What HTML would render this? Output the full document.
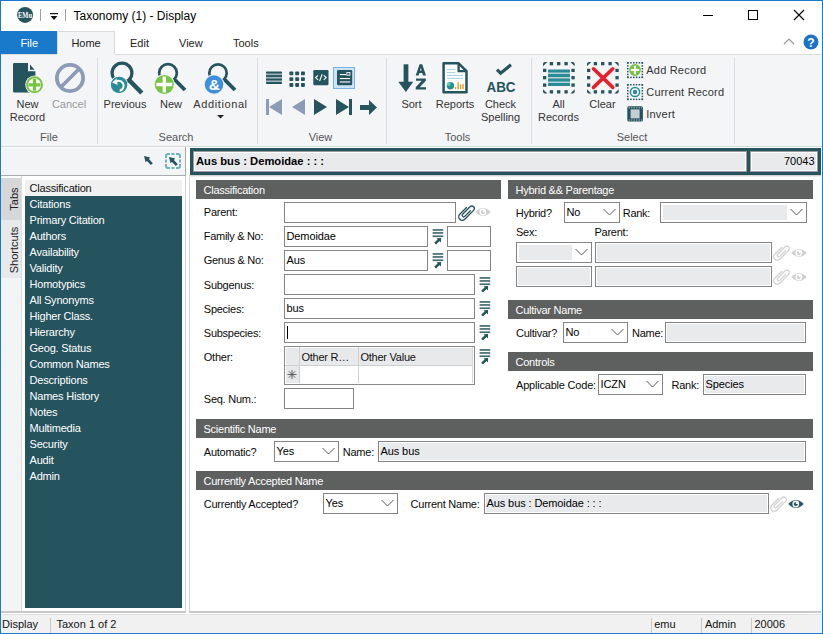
<!DOCTYPE html>
<html><head><meta charset="utf-8"><style>
html,body{margin:0;padding:0;}
body{width:823px;height:634px;overflow:hidden;position:relative;background:#fff;font-family:"Liberation Sans", sans-serif;}
.t{position:absolute;white-space:nowrap;line-height:1;font-family:"Liberation Sans", sans-serif;}
svg{overflow:visible}
</style></head><body>
<svg style="position:absolute;left:17px;top:7px" width="17" height="17" viewBox="0 0 17 17"><circle cx="8.1" cy="7.9" r="8" fill="#25535e"/><text x="1" y="11" font-family="Liberation Serif" font-size="7.6" font-weight="bold" fill="#fff" textLength="14" lengthAdjust="spacingAndGlyphs">EMu</text></svg>
<div style="position:absolute;left:40px;top:9px;width:1px;height:12px;background:#a0a0a0"></div>
<svg style="position:absolute;left:50px;top:12px" width="8" height="9" viewBox="0 0 8 9"><rect x="0" y="1" width="8" height="1.2" fill="#111"/><path d="M0.5 4 L7.5 4 L4 8 Z" fill="#111"/></svg>
<div style="position:absolute;left:65px;top:9px;width:1px;height:12px;background:#a0a0a0"></div>
<div class="t" style="left:73.5px;top:9.84px;font-size:12px;color:#000;font-weight:normal;">Taxonomy (1) - Display</div>
<div style="position:absolute;left:703px;top:15px;width:10px;height:1px;background:#000"></div>
<div style="position:absolute;left:748px;top:10px;width:10px;height:10px;border:1px solid #000;box-sizing:border-box"></div>
<svg style="position:absolute;left:793px;top:9px" width="12" height="12" viewBox="0 0 12 12"><path d="M1 1 L11 11 M11 1 L1 11" stroke="#000" stroke-width="1.1"/></svg>
<div style="position:absolute;left:1px;top:31px;width:56px;height:23px;background:#1979ca"></div>
<div class="t" style="left:20.4px;top:37.99px;font-size:11px;color:#fff;font-weight:normal;">File</div>
<div style="position:absolute;left:57px;top:31px;width:58px;height:24px;background:#f4f5f7;border:1px solid #dadbdc;border-bottom:none;box-sizing:border-box"></div>
<div class="t" style="left:71.4px;top:37.99px;font-size:11px;color:#222;font-weight:normal;">Home</div>
<div class="t" style="left:130px;top:37.99px;font-size:11px;color:#222;font-weight:normal;">Edit</div>
<div class="t" style="left:179px;top:37.99px;font-size:11px;color:#222;font-weight:normal;">View</div>
<div class="t" style="left:233px;top:37.99px;font-size:11px;color:#222;font-weight:normal;">Tools</div>
<svg style="position:absolute;left:783px;top:37px" width="12" height="9" viewBox="0 0 12 9"><path d="M1 7 L6 2 L11 7" stroke="#999" stroke-width="1.2" fill="none"/></svg>
<svg style="position:absolute;left:803px;top:34px" width="16" height="16" viewBox="0 0 16 16"><circle cx="8" cy="8" r="7.5" fill="#1a73c9"/><text x="8" y="12.5" font-family="Liberation Sans" font-size="12" font-weight="bold" fill="#fff" text-anchor="middle">?</text></svg>
<div style="position:absolute;left:1px;top:54px;width:821px;height:92px;background:#f4f5f7"></div>
<div style="position:absolute;left:1px;top:54px;width:56px;height:1px;background:#dadbdc"></div>
<div style="position:absolute;left:115px;top:54px;width:707px;height:1px;background:#dadbdc"></div>
<div style="position:absolute;left:1px;top:146px;width:821px;height:1px;background:#d5d6d8"></div>
<div style="position:absolute;left:97px;top:58px;width:1px;height:86px;background:#dcdde0"></div>
<div style="position:absolute;left:257px;top:58px;width:1px;height:86px;background:#dcdde0"></div>
<div style="position:absolute;left:386px;top:58px;width:1px;height:86px;background:#dcdde0"></div>
<div style="position:absolute;left:531px;top:58px;width:1px;height:86px;background:#dcdde0"></div>
<div style="position:absolute;left:734px;top:58px;width:1px;height:86px;background:#dcdde0"></div>
<div class="t" style="left:-151.1px;width:400px;text-align:center;top:132.19px;font-size:11px;color:#555;font-weight:normal;">File</div>
<div class="t" style="left:-24px;width:400px;text-align:center;top:132.19px;font-size:11px;color:#555;font-weight:normal;">Search</div>
<div class="t" style="left:120.5px;width:400px;text-align:center;top:132.19px;font-size:11px;color:#555;font-weight:normal;">View</div>
<div class="t" style="left:257.5px;width:400px;text-align:center;top:132.19px;font-size:11px;color:#555;font-weight:normal;">Tools</div>
<div class="t" style="left:432px;width:400px;text-align:center;top:132.19px;font-size:11px;color:#555;font-weight:normal;">Select</div>
<svg style="position:absolute;left:12px;top:62px" width="36" height="34" viewBox="0 0 36 34"><path d="M1 2.2 Q1 1 2.2 1 H16 V9.2 H23.4 V29.2 Q23.4 30.4 22.2 30.4 H2.2 Q1 30.4 1 29.2 Z" fill="#25535e"/>
<path d="M18 2.4 V7.7 H22.6 Z" fill="#25535e"/>
<circle cx="22.5" cy="22.8" r="9.3" fill="#f4f5f7"/>
<circle cx="22.5" cy="22.8" r="7.5" fill="#fff" stroke="#77c442" stroke-width="1.9"/>
<path d="M22.5 16.8 V28.8 M16.5 22.8 H28.5" stroke="#77c442" stroke-width="3.2"/></svg>
<div class="t" style="left:-172.5px;width:400px;text-align:center;top:99.39px;font-size:11px;color:#333;font-weight:normal;">New</div>
<div class="t" style="left:-172.5px;width:400px;text-align:center;top:111.89px;font-size:11px;color:#333;font-weight:normal;">Record</div>
<svg style="position:absolute;left:55px;top:63px" width="30" height="30" viewBox="0 0 30 30"><circle cx="15" cy="15" r="13.1" fill="none" stroke="#8c9bb6" stroke-width="3.8"/><path d="M6 24 L24 6" stroke="#8c9bb6" stroke-width="3.8"/></svg>
<div class="t" style="left:-131px;width:400px;text-align:center;top:99.39px;font-size:11px;color:#999;font-weight:normal;">Cancel</div>
<svg style="position:absolute;left:101.5px;top:53.3px" width="44" height="44" viewBox="0 0 44 44"><circle cx="20" cy="20" r="9.9" fill="none" stroke="#25535e" stroke-width="3.2"/><path d="M27.00 27.00 L39.80 40.00" stroke="#25535e" stroke-width="4.6"/><circle cx="17.099999999999994" cy="31.900000000000006" r="9.2" fill="#f4f5f7"/><circle cx="17.099999999999994" cy="31.900000000000006" r="8.2" fill="#2a8b96"/><path d="M12.599999999999994 29.900000000000006 A5 5 0 1 1 17.599999999999994 37.7" stroke="#fff" stroke-width="2" fill="none"/><path d="M10.099999999999994 29.400000000000006 L14.599999999999994 25.400000000000006 L15.599999999999994 31.900000000000006 Z" fill="#fff"/></svg>
<svg style="position:absolute;left:148px;top:53px" width="44" height="44" viewBox="0 0 44 44"><circle cx="20" cy="20" r="8.85" fill="none" stroke="#25535e" stroke-width="2.7"/><path d="M26.26 26.26 L37.00 37.00" stroke="#25535e" stroke-width="3.8"/><circle cx="16.30000000000001" cy="31.5" r="10.5" fill="#f4f5f7"/><circle cx="16.30000000000001" cy="31.5" r="9.5" fill="#76c442"/><path d="M16.30000000000001 23.5 V39.5 M8.300000000000011 31.5 H24.30000000000001" stroke="#fff" stroke-width="3.4"/></svg>
<svg style="position:absolute;left:198px;top:53px" width="44" height="44" viewBox="0 0 44 44"><circle cx="20" cy="20" r="8.7" fill="none" stroke="#25535e" stroke-width="2.7"/><path d="M26.15 26.15 L37.00 37.00" stroke="#25535e" stroke-width="3.8"/><circle cx="16" cy="31.5" r="10.3" fill="#f4f5f7"/><circle cx="16" cy="31.5" r="9.3" fill="#3f8fe0"/><text x="16.3" y="37.1" font-family="Liberation Sans" font-size="15.5" font-weight="bold" fill="#fff" text-anchor="middle">&amp;</text></svg>
<div class="t" style="left:-75px;width:400px;text-align:center;top:99.39px;font-size:11px;color:#333;font-weight:normal;">Previous</div>
<div class="t" style="left:-29px;width:400px;text-align:center;top:99.39px;font-size:11px;color:#333;font-weight:normal;">New</div>
<div class="t" style="left:20.5px;width:400px;text-align:center;top:99.39px;font-size:11px;color:#333;font-weight:normal;letter-spacing:0.6px">Additional</div>
<svg style="position:absolute;left:217px;top:115px" width="7" height="4" viewBox="0 0 7 4"><path d="M0 0 L7 0 L3.5 3.5 Z" fill="#222"/></svg>
<svg style="position:absolute;left:266px;top:71px" width="16" height="14" viewBox="0 0 16 14"><rect x="0" y="1" width="16" height="12" fill="#9fb6ba"/><rect x="0" y="0.6" width="16" height="2" rx="0.8" fill="#25535e"/><rect x="0" y="4.1" width="16" height="1.8" fill="#25535e"/><rect x="0" y="7.6" width="16" height="1.8" fill="#25535e"/><rect x="0" y="11.1" width="16" height="2" rx="0.8" fill="#25535e"/></svg>
<svg style="position:absolute;left:289px;top:70.5px" width="17" height="17" viewBox="0 0 17 17"><rect x="0.4" y="0.4" width="3.9" height="3.9" rx="0.8" fill="#25535e"/><rect x="6.2" y="0.4" width="3.9" height="3.9" rx="0.8" fill="#25535e"/><rect x="12.0" y="0.4" width="3.9" height="3.9" rx="0.8" fill="#25535e"/><rect x="0.4" y="6.2" width="3.9" height="3.9" rx="0.8" fill="#25535e"/><rect x="6.2" y="6.2" width="3.9" height="3.9" rx="0.8" fill="#25535e"/><rect x="12.0" y="6.2" width="3.9" height="3.9" rx="0.8" fill="#25535e"/><rect x="0.4" y="12.0" width="3.9" height="3.9" rx="0.8" fill="#25535e"/><rect x="6.2" y="12.0" width="3.9" height="3.9" rx="0.8" fill="#25535e"/><rect x="12.0" y="12.0" width="3.9" height="3.9" rx="0.8" fill="#25535e"/></svg>
<svg style="position:absolute;left:313px;top:70.4px" width="16" height="16" viewBox="0 0 16 16"><rect x="0.3" y="0" width="15.2" height="15.2" rx="1.2" fill="#25535e"/><path d="M5 5.3 L2.6 7.6 L5 9.9 M10.8 5.3 L13.2 7.6 L10.8 9.9 M9.2 4.3 L6.6 11" stroke="#fff" stroke-width="1.1" fill="none"/></svg>
<div style="position:absolute;left:333px;top:67px;width:22px;height:22px;background:#cde4f7;border:1px solid #7ab2e8;box-sizing:border-box"></div>
<svg style="position:absolute;left:336.5px;top:70.4px" width="16" height="16" viewBox="0 0 16 16"><rect x="0" y="0" width="15.2" height="15.2" rx="1.2" fill="#25535e"/><rect x="2.8" y="4" width="6.2" height="1.1" fill="#fff"/><rect x="9.8" y="2.6" width="3.2" height="2.6" fill="none" stroke="#fff" stroke-width="0.9"/><rect x="2.8" y="8" width="10.4" height="1.1" fill="#fff"/><rect x="2.8" y="11.4" width="10.4" height="1.1" fill="#fff"/></svg>
<svg style="position:absolute;left:265px;top:98px" width="18" height="18" viewBox="0 0 18 18"><rect x="1" y="1" width="3" height="16" fill="#8c9bb6"/><path d="M4 9 L17 1 L17 17 Z" fill="#8c9bb6"/></svg>
<svg style="position:absolute;left:291px;top:98px" width="16" height="18" viewBox="0 0 16 18"><path d="M1 9 L14 1 L14 17 Z" fill="#8c9bb6"/></svg>
<svg style="position:absolute;left:312px;top:98px" width="16" height="18" viewBox="0 0 16 18"><path d="M2 1 L15 9 L2 17 Z" fill="#25535e"/></svg>
<svg style="position:absolute;left:335px;top:98px" width="18" height="18" viewBox="0 0 18 18"><path d="M1 1 L14 9 L1 17 Z" fill="#25535e"/><rect x="14" y="1" width="3" height="16" fill="#25535e"/></svg>
<svg style="position:absolute;left:359px;top:99px" width="19" height="17" viewBox="0 0 19 17"><path d="M1 6 L10 6 L10 1 L18 8.5 L10 16 L10 11 L1 11 Z" fill="#25535e"/></svg>
<svg style="position:absolute;left:397px;top:62px" width="30" height="32" viewBox="0 0 30 32"><rect x="6.6" y="2.3" width="4.8" height="20" fill="#25535e"/><path d="M1.3 19.7 L16.3 19.7 L8.9 30 Z" fill="#25535e"/><path d="M18.7 13.4 L22.6 2.3 L25.2 2.3 L29 13.4 L26 13.4 L25.2 10.9 L22.4 10.9 L21.6 13.4 Z M23 8.6 L24.6 8.6 L23.8 5.8 Z" fill="#25535e" fill-rule="evenodd"/><path d="M19 16.5 L28.8 16.5 L28.8 18.8 L22.8 25.3 L29 25.3 L29 27.6 L18.7 27.6 L18.7 25.3 L24.7 18.8 L19 18.8 Z" fill="#25535e"/></svg>
<div class="t" style="left:211.5px;width:400px;text-align:center;top:99.39px;font-size:11px;color:#333;font-weight:normal;">Sort</div>
<svg style="position:absolute;left:441px;top:61px" width="28" height="34" viewBox="0 0 28 34"><path d="M2.6 2.3 H17.6 L25.5 10.2 V31.3 H2.6 Z" fill="#fff" stroke="#25535e" stroke-width="2.5" stroke-linejoin="round"/>
<path d="M17.6 2.3 V10.2 H25.5" fill="none" stroke="#25535e" stroke-width="2.3"/>
<g fill="#a9d3ec"><rect x="6" y="7.9" width="8.3" height="1.1"/><rect x="6" y="10.9" width="8.3" height="1.1"/><rect x="6" y="13.9" width="16" height="1.1"/><rect x="6" y="16.8" width="16" height="1.1"/></g>
<circle cx="9.4" cy="24.8" r="3.7" fill="#2a8f93"/><path d="M9.4 24.8 L9.4 21.1 A3.7 3.7 0 0 0 5.7 24.8 Z" fill="#56d0b2"/>
<g fill="#ec9a2a"><rect x="13.8" y="26" width="1.4" height="2.1"/><rect x="16.5" y="21.2" width="1.4" height="6.9"/><rect x="18.9" y="23.5" width="1.4" height="4.6"/><rect x="21.3" y="22.9" width="1.4" height="5.2"/></g></svg>
<div class="t" style="left:255px;width:400px;text-align:center;top:99.39px;font-size:11px;color:#333;font-weight:normal;">Reports</div>
<svg style="position:absolute;left:485px;top:62px" width="33" height="31" viewBox="0 0 33 31"><path d="M12 7.6 L15.6 11.2 L26 2.8" stroke="#25535e" stroke-width="3.2" fill="none"/><text x="1.5" y="29.6" font-family="Liberation Sans" font-size="14" font-weight="bold" fill="#25535e" textLength="29" lengthAdjust="spacingAndGlyphs">ABC</text></svg>
<div class="t" style="left:300.5px;width:400px;text-align:center;top:99.39px;font-size:11px;color:#333;font-weight:normal;">Check</div>
<div class="t" style="left:300.5px;width:400px;text-align:center;top:111.89px;font-size:11px;color:#333;font-weight:normal;">Spelling</div>
<svg style="position:absolute;left:543px;top:62px" width="32" height="32" viewBox="0 0 32 32"><g fill="#25535e"><rect x="6.75" y="0" width="3.3" height="3.3"/><rect x="6.75" y="28.2" width="3.3" height="3.3"/><rect x="0" y="6.75" width="3.3" height="3.3"/><rect x="28.4" y="6.75" width="3.3" height="3.3"/><rect x="14.05" y="0" width="3.3" height="3.3"/><rect x="14.05" y="28.2" width="3.3" height="3.3"/><rect x="0" y="14.05" width="3.3" height="3.3"/><rect x="28.4" y="14.05" width="3.3" height="3.3"/><rect x="21.45" y="0" width="3.3" height="3.3"/><rect x="21.45" y="28.2" width="3.3" height="3.3"/><rect x="0" y="21.45" width="3.3" height="3.3"/><rect x="28.4" y="21.45" width="3.3" height="3.3"/><path d="M0 4.3 V2 A2 2 0 0 1 2 0 H4.3 Z"/><path d="M27.4 0 H29.7 A2 2 0 0 1 31.7 2 V4.3 Z"/><path d="M31.7 27.2 V29.5 A2 2 0 0 1 29.7 31.5 H27.4 Z"/><path d="M4.3 31.5 H2 A2 2 0 0 1 0 29.5 V27.2 Z"/></g><rect x="5" y="8" width="22" height="16" fill="#b5d3d6"/><g fill="#2a8b96"><rect x="5" y="7.5" width="22" height="3" rx="0.6"/><rect x="5" y="12" width="22" height="3" rx="0.6"/><rect x="5" y="16.5" width="22" height="3" rx="0.6"/><rect x="5" y="21" width="22" height="3" rx="0.6"/></g></svg>
<div class="t" style="left:358.5px;width:400px;text-align:center;top:99.39px;font-size:11px;color:#333;font-weight:normal;">All</div>
<div class="t" style="left:358.5px;width:400px;text-align:center;top:111.89px;font-size:11px;color:#333;font-weight:normal;">Records</div>
<svg style="position:absolute;left:587px;top:62px" width="32" height="32" viewBox="0 0 32 32"><g fill="#25535e"><rect x="6.75" y="0" width="3.3" height="3.3"/><rect x="6.75" y="28.2" width="3.3" height="3.3"/><rect x="0" y="6.75" width="3.3" height="3.3"/><rect x="28.4" y="6.75" width="3.3" height="3.3"/><rect x="14.05" y="0" width="3.3" height="3.3"/><rect x="14.05" y="28.2" width="3.3" height="3.3"/><rect x="0" y="14.05" width="3.3" height="3.3"/><rect x="28.4" y="14.05" width="3.3" height="3.3"/><rect x="21.45" y="0" width="3.3" height="3.3"/><rect x="21.45" y="28.2" width="3.3" height="3.3"/><rect x="0" y="21.45" width="3.3" height="3.3"/><rect x="28.4" y="21.45" width="3.3" height="3.3"/><path d="M0 4.3 V2 A2 2 0 0 1 2 0 H4.3 Z"/><path d="M27.4 0 H29.7 A2 2 0 0 1 31.7 2 V4.3 Z"/><path d="M31.7 27.2 V29.5 A2 2 0 0 1 29.7 31.5 H27.4 Z"/><path d="M4.3 31.5 H2 A2 2 0 0 1 0 29.5 V27.2 Z"/></g><path d="M6.5 6.8 L25.8 25.4 M25.8 6.8 L6.5 25.4" stroke="#e8202a" stroke-width="3.6" stroke-linecap="round"/></svg>
<div class="t" style="left:402.5px;width:400px;text-align:center;top:99.39px;font-size:11px;color:#333;font-weight:normal;">Clear</div>
<svg style="position:absolute;left:627px;top:62px" width="17" height="17" viewBox="0 0 17 17"><g fill="#25535e"><rect x="0.3" y="0" width="1.5" height="1.5"/><rect x="0.3" y="14.6" width="1.5" height="1.5"/><rect x="0" y="0.3" width="1.5" height="1.5"/><rect x="14.6" y="0.3" width="1.5" height="1.5"/><rect x="3.15" y="0" width="1.5" height="1.5"/><rect x="3.15" y="14.6" width="1.5" height="1.5"/><rect x="0" y="3.15" width="1.5" height="1.5"/><rect x="14.6" y="3.15" width="1.5" height="1.5"/><rect x="6.0" y="0" width="1.5" height="1.5"/><rect x="6.0" y="14.6" width="1.5" height="1.5"/><rect x="0" y="6.0" width="1.5" height="1.5"/><rect x="14.6" y="6.0" width="1.5" height="1.5"/><rect x="8.850000000000001" y="0" width="1.5" height="1.5"/><rect x="8.850000000000001" y="14.6" width="1.5" height="1.5"/><rect x="0" y="8.850000000000001" width="1.5" height="1.5"/><rect x="14.6" y="8.850000000000001" width="1.5" height="1.5"/><rect x="11.700000000000001" y="0" width="1.5" height="1.5"/><rect x="11.700000000000001" y="14.6" width="1.5" height="1.5"/><rect x="0" y="11.700000000000001" width="1.5" height="1.5"/><rect x="14.6" y="11.700000000000001" width="1.5" height="1.5"/><rect x="14.55" y="0" width="1.5" height="1.5"/><rect x="14.55" y="14.6" width="1.5" height="1.5"/><rect x="0" y="14.55" width="1.5" height="1.5"/><rect x="14.6" y="14.55" width="1.5" height="1.5"/></g><circle cx="8" cy="8" r="5.9" fill="#77c442"/><path d="M8 3.8 V12.2 M3.8 8 H12.2" stroke="#fff" stroke-width="2.2"/></svg>
<svg style="position:absolute;left:627px;top:84px" width="17" height="17" viewBox="0 0 17 17"><g fill="#25535e"><rect x="0.3" y="0" width="1.5" height="1.5"/><rect x="0.3" y="14.6" width="1.5" height="1.5"/><rect x="0" y="0.3" width="1.5" height="1.5"/><rect x="14.6" y="0.3" width="1.5" height="1.5"/><rect x="3.15" y="0" width="1.5" height="1.5"/><rect x="3.15" y="14.6" width="1.5" height="1.5"/><rect x="0" y="3.15" width="1.5" height="1.5"/><rect x="14.6" y="3.15" width="1.5" height="1.5"/><rect x="6.0" y="0" width="1.5" height="1.5"/><rect x="6.0" y="14.6" width="1.5" height="1.5"/><rect x="0" y="6.0" width="1.5" height="1.5"/><rect x="14.6" y="6.0" width="1.5" height="1.5"/><rect x="8.850000000000001" y="0" width="1.5" height="1.5"/><rect x="8.850000000000001" y="14.6" width="1.5" height="1.5"/><rect x="0" y="8.850000000000001" width="1.5" height="1.5"/><rect x="14.6" y="8.850000000000001" width="1.5" height="1.5"/><rect x="11.700000000000001" y="0" width="1.5" height="1.5"/><rect x="11.700000000000001" y="14.6" width="1.5" height="1.5"/><rect x="0" y="11.700000000000001" width="1.5" height="1.5"/><rect x="14.6" y="11.700000000000001" width="1.5" height="1.5"/><rect x="14.55" y="0" width="1.5" height="1.5"/><rect x="14.55" y="14.6" width="1.5" height="1.5"/><rect x="0" y="14.55" width="1.5" height="1.5"/><rect x="14.6" y="14.55" width="1.5" height="1.5"/></g><circle cx="8" cy="8" r="4.6" fill="none" stroke="#2a8b96" stroke-width="1.5"/><circle cx="8" cy="8" r="2.2" fill="#2a8b96"/></svg>
<svg style="position:absolute;left:627px;top:106px" width="17" height="17" viewBox="0 0 17 17"><rect x="0.3" y="0.2" width="15.6" height="15.4" rx="1.6" fill="#25535e"/><rect x="3.6" y="3.4" width="9" height="9" fill="#c3ced2"/><path d="M1.6 1.8 H15 M1.6 14 H15" stroke="#b9c7cb" stroke-width="1" stroke-dasharray="1.3 1.2"/></svg>
<div class="t" style="left:646.3px;top:65.09px;font-size:11px;color:#333;font-weight:normal;letter-spacing:0.2px">Add Record</div>
<div class="t" style="left:646.3px;top:87.09px;font-size:11px;color:#333;font-weight:normal;letter-spacing:0.2px">Current Record</div>
<div class="t" style="left:646.3px;top:109.09px;font-size:11px;color:#333;font-weight:normal;letter-spacing:0.2px">Invert</div>
<div style="position:absolute;left:1px;top:147px;width:184px;height:28px;background:#f3f4f6"></div>
<div style="position:absolute;left:1px;top:147px;width:184px;height:1px;background:#fff"></div>
<div style="position:absolute;left:1px;top:147px;width:1px;height:28px;background:#fff"></div>
<div style="position:absolute;left:1px;top:175px;width:185px;height:1px;background:#ababab"></div>
<div style="position:absolute;left:185px;top:147px;width:1px;height:29px;background:#ababab"></div>
<div style="position:absolute;left:185px;top:176px;width:1px;height:435px;background:#d0d0d0"></div>
<div style="position:absolute;left:189px;top:175px;width:1px;height:436px;background:#d6d6d6"></div>
<div style="position:absolute;left:189px;top:175px;width:632px;height:1px;background:#d4d4d4"></div>
<div style="position:absolute;left:189px;top:176px;width:632px;height:1px;background:#ececec"></div>
<svg style="position:absolute;left:142px;top:154px" width="14" height="14" viewBox="0 0 14 14"><path d="M2 2 L8.3 3.6 L3.6 8.3 Z" fill="#25535e"/><path d="M5 5 L9.8 10.2" stroke="#25535e" stroke-width="2.7"/></svg>
<svg style="position:absolute;left:164px;top:152px" width="18" height="18" viewBox="0 0 18 18"><path d="M2 6 V4 A2 2 0 0 1 4 2 H6 M12 2 H14 A2 2 0 0 1 16 4 V6 M16 12 V14 A2 2 0 0 1 14 16 H12 M6 16 H4 A2 2 0 0 1 2 14 V12 M7.5 2 H10.5 M16 7.5 V10.5 M10.5 16 H7.5 M2 10.5 V7.5" stroke="#6fb3ba" stroke-width="2" fill="none"/></svg>
<svg style="position:absolute;left:167px;top:154.5px" width="14" height="14" viewBox="0 0 14 14"><path d="M2 2 L8.3 3.6 L3.6 8.3 Z" fill="#25535e"/><path d="M5 5 L9.8 10.2" stroke="#25535e" stroke-width="2.7"/></svg>
<div style="position:absolute;left:1px;top:176px;width:20px;height:436px;background:#f3f4f6"></div>
<div style="position:absolute;left:21px;top:176px;width:1px;height:436px;background:#dcdcdc"></div>
<div style="position:absolute;left:22px;top:176px;width:163px;height:436px;background:#fff"></div>
<div style="position:absolute;left:1px;top:176px;width:20px;height:2px;background:#fff"></div>
<div style="position:absolute;left:1px;top:178px;width:20px;height:42px;background:#d6d7d9"></div>
<div style="position:absolute;left:1px;top:220px;width:20px;height:58px;background:#e8e9eb"></div>
<div class="t" style="left:8.5px;top:199px;font-size:11px;color:#222;transform-origin:0 0;transform:rotate(-90deg) translate(-50%,0);"><span style="position:relative;left:-0px">Tabs</span></div>
<div class="t" style="left:8.5px;top:250px;font-size:11px;color:#222;transform-origin:0 0;transform:rotate(-90deg) translate(-50%,0);">Shortcuts</div>
<div style="position:absolute;left:25px;top:180px;width:157px;height:428px;background:#25535e"></div>
<div style="position:absolute;left:25px;top:180px;width:157px;height:16px;background:#f0f0f0"></div>
<div class="t" style="left:29.5px;top:182.69px;font-size:11px;color:#111;font-weight:normal;letter-spacing:-0.2px">Classification</div>
<div class="t" style="left:29.5px;top:198.69px;font-size:11px;color:#fff;font-weight:normal;letter-spacing:-0.2px">Citations</div>
<div class="t" style="left:29.5px;top:214.69px;font-size:11px;color:#fff;font-weight:normal;letter-spacing:-0.2px">Primary Citation</div>
<div class="t" style="left:29.5px;top:230.69px;font-size:11px;color:#fff;font-weight:normal;letter-spacing:-0.2px">Authors</div>
<div class="t" style="left:29.5px;top:246.69px;font-size:11px;color:#fff;font-weight:normal;letter-spacing:-0.2px">Availability</div>
<div class="t" style="left:29.5px;top:262.69px;font-size:11px;color:#fff;font-weight:normal;letter-spacing:-0.2px">Validity</div>
<div class="t" style="left:29.5px;top:278.69px;font-size:11px;color:#fff;font-weight:normal;letter-spacing:-0.2px">Homotypics</div>
<div class="t" style="left:29.5px;top:294.69px;font-size:11px;color:#fff;font-weight:normal;letter-spacing:-0.2px">All Synonyms</div>
<div class="t" style="left:29.5px;top:310.69px;font-size:11px;color:#fff;font-weight:normal;letter-spacing:-0.2px">Higher Class.</div>
<div class="t" style="left:29.5px;top:326.69px;font-size:11px;color:#fff;font-weight:normal;letter-spacing:-0.2px">Hierarchy</div>
<div class="t" style="left:29.5px;top:342.69px;font-size:11px;color:#fff;font-weight:normal;letter-spacing:-0.2px">Geog. Status</div>
<div class="t" style="left:29.5px;top:358.69px;font-size:11px;color:#fff;font-weight:normal;letter-spacing:-0.2px">Common Names</div>
<div class="t" style="left:29.5px;top:374.69px;font-size:11px;color:#fff;font-weight:normal;letter-spacing:-0.2px">Descriptions</div>
<div class="t" style="left:29.5px;top:390.69px;font-size:11px;color:#fff;font-weight:normal;letter-spacing:-0.2px">Names History</div>
<div class="t" style="left:29.5px;top:406.69px;font-size:11px;color:#fff;font-weight:normal;letter-spacing:-0.2px">Notes</div>
<div class="t" style="left:29.5px;top:422.69px;font-size:11px;color:#fff;font-weight:normal;letter-spacing:-0.2px">Multimedia</div>
<div class="t" style="left:29.5px;top:438.69px;font-size:11px;color:#fff;font-weight:normal;letter-spacing:-0.2px">Security</div>
<div class="t" style="left:29.5px;top:454.69px;font-size:11px;color:#fff;font-weight:normal;letter-spacing:-0.2px">Audit</div>
<div class="t" style="left:29.5px;top:470.69px;font-size:11px;color:#fff;font-weight:normal;letter-spacing:-0.2px">Admin</div>
<div style="position:absolute;left:1px;top:611px;width:185px;height:2px;background:#c8c8c8"></div>
<div style="position:absolute;left:189px;top:611px;width:632px;height:2px;background:#c8c8c8"></div>
<div style="position:absolute;left:1px;top:614px;width:821px;height:1px;background:#e4e4e4"></div>
<div style="position:absolute;left:1px;top:615px;width:821px;height:18px;background:#f1f1f1"></div>
<div style="position:absolute;left:50px;top:618px;width:1px;height:15px;background:#c8c8c8"></div>
<div style="position:absolute;left:651px;top:618px;width:1px;height:15px;background:#c8c8c8"></div>
<div style="position:absolute;left:701px;top:618px;width:1px;height:15px;background:#c8c8c8"></div>
<div style="position:absolute;left:751px;top:618px;width:1px;height:15px;background:#c8c8c8"></div>
<div class="t" style="left:2px;top:618.69px;font-size:11px;color:#111;font-weight:normal;">Display</div>
<div class="t" style="left:56.5px;top:618.69px;font-size:11px;color:#111;font-weight:normal;">Taxon 1 of 2</div>
<div class="t" style="left:654.2px;top:618.69px;font-size:11px;color:#111;font-weight:normal;">emu</div>
<div class="t" style="left:704.9px;top:618.69px;font-size:11px;color:#111;font-weight:normal;">Admin</div>
<div class="t" style="left:754.5px;top:618.69px;font-size:11px;color:#111;font-weight:normal;">20006</div>
<div style="position:absolute;left:190px;top:148px;width:631px;height:27px;background:#25535e"></div>
<div style="position:absolute;left:193px;top:151px;width:554px;height:21px;background:#fff;border:1px solid #9a9a9a;box-sizing:border-box"></div>
<div style="position:absolute;left:195px;top:153px;width:550px;height:17px;background:#e9eaec"></div>
<div style="position:absolute;left:750px;top:151px;width:68px;height:21px;background:#fff;border:1px solid #9a9a9a;box-sizing:border-box"></div>
<div style="position:absolute;left:752px;top:153px;width:64px;height:17px;background:#e9eaec"></div>
<div class="t" style="left:196px;top:155.52px;font-size:11.2px;color:#000;font-weight:bold;">Aus bus : Demoidae : : :</div>
<div class="t" style="left:414.5px;width:400px;text-align:right;top:155.69px;font-size:11px;color:#000;font-weight:normal;">70043</div>
<div style="position:absolute;left:196px;top:180px;width:305px;height:19px;background:#5e5f5f"></div>
<div class="t" style="left:203.5px;top:184.69px;font-size:11px;color:#fff;font-weight:normal;letter-spacing:-0.25px">Classification</div>
<div style="position:absolute;left:508px;top:180px;width:305px;height:19px;background:#5e5f5f"></div>
<div class="t" style="left:515.5px;top:184.69px;font-size:11px;color:#fff;font-weight:normal;letter-spacing:-0.25px">Hybrid &amp;&amp; Parentage</div>
<div style="position:absolute;left:508px;top:300px;width:305px;height:19px;background:#5e5f5f"></div>
<div class="t" style="left:515.5px;top:304.69px;font-size:11px;color:#fff;font-weight:normal;letter-spacing:-0.25px">Cultivar Name</div>
<div style="position:absolute;left:508px;top:352px;width:305px;height:19px;background:#5e5f5f"></div>
<div class="t" style="left:515.5px;top:356.69px;font-size:11px;color:#fff;font-weight:normal;letter-spacing:-0.25px">Controls</div>
<div style="position:absolute;left:196px;top:419px;width:617px;height:19px;background:#5e5f5f"></div>
<div class="t" style="left:203.5px;top:423.69px;font-size:11px;color:#fff;font-weight:normal;letter-spacing:-0.25px">Scientific Name</div>
<div style="position:absolute;left:196px;top:471px;width:617px;height:19px;background:#5e5f5f"></div>
<div class="t" style="left:203.5px;top:475.69px;font-size:11px;color:#fff;font-weight:normal;letter-spacing:-0.25px">Currently Accepted Name</div>
<div class="t" style="left:203.8px;top:207.49px;font-size:11px;color:#0a0a0a;font-weight:normal;letter-spacing:-0.25px">Parent:</div>
<div style="position:absolute;left:284px;top:202px;width:172px;height:21px;background:#fff;border:1px solid #848484;box-sizing:border-box"></div>
<svg style="position:absolute;left:458px;top:204px" width="17" height="17" viewBox="0 0 17 17"><g transform="translate(8.5 8.5) rotate(45) translate(-3.5 -10)"><path d="M5 6 L5 14 A1.5 1.5 0 0 1 2 14 L2 3.5 A2.5 2.5 0 0 1 7 3.5 L7 16 A3.5 3.5 0 0 1 0 16 L0 6.5" stroke="#25535e" stroke-width="1.35" fill="none" stroke-linecap="round"/></g></svg>
<svg style="position:absolute;left:475px;top:207px" width="16" height="10" viewBox="0 0 16 10"><path d="M0.3 5 Q8 -3.2 15.7 5 Q8 13.2 0.3 5 Z" fill="#cfcfcf"/><circle cx="7.8" cy="5" r="3.4" fill="#fff"/><circle cx="7.8" cy="5" r="2.1" fill="#cfcfcf"/><path d="M7.8 5 L7.8 2.6 A2.4 2.4 0 0 1 10.2 5 Z" fill="#fff"/></svg>
<div class="t" style="left:203.8px;top:231.49px;font-size:11px;color:#0a0a0a;font-weight:normal;letter-spacing:-0.3px">Family &amp; No:</div>
<div style="position:absolute;left:284px;top:226px;width:144px;height:21px;background:#fff;border:1px solid #848484;box-sizing:border-box"></div>
<div class="t" style="left:286.5px;top:231.39px;font-size:11px;color:#000;font-weight:normal;letter-spacing:-0.1px">Demoidae</div>
<svg style="position:absolute;left:432px;top:229px" width="12" height="16" viewBox="0 0 12 16"><g fill="#25535e" opacity="0.85"><rect x="0.6" y="0.1" width="10.6" height="1.7"/><rect x="0.6" y="3.1" width="10.6" height="1.7"/><rect x="0.6" y="6.4" width="10.6" height="1.7"/></g><path d="M3.1 14.7 L7.2 10.6" stroke="#25535e" stroke-width="2.6"/><path d="M4.6 9.3 L9.1 9.1 L9 13.4 Z" fill="#25535e"/></svg>
<div style="position:absolute;left:447px;top:226px;width:44px;height:21px;background:#fff;border:1px solid #848484;box-sizing:border-box"></div>
<div class="t" style="left:203.8px;top:255.49px;font-size:11px;color:#0a0a0a;font-weight:normal;letter-spacing:-0.3px">Genus &amp; No:</div>
<div style="position:absolute;left:284px;top:250px;width:144px;height:21px;background:#fff;border:1px solid #848484;box-sizing:border-box"></div>
<div class="t" style="left:286.5px;top:255.39px;font-size:11px;color:#000;font-weight:normal;letter-spacing:-0.1px">Aus</div>
<svg style="position:absolute;left:432px;top:253px" width="12" height="16" viewBox="0 0 12 16"><g fill="#25535e" opacity="0.85"><rect x="0.6" y="0.1" width="10.6" height="1.7"/><rect x="0.6" y="3.1" width="10.6" height="1.7"/><rect x="0.6" y="6.4" width="10.6" height="1.7"/></g><path d="M3.1 14.7 L7.2 10.6" stroke="#25535e" stroke-width="2.6"/><path d="M4.6 9.3 L9.1 9.1 L9 13.4 Z" fill="#25535e"/></svg>
<div style="position:absolute;left:447px;top:250px;width:44px;height:21px;background:#fff;border:1px solid #848484;box-sizing:border-box"></div>
<div class="t" style="left:203.8px;top:280.49px;font-size:11px;color:#0a0a0a;font-weight:normal;letter-spacing:-0.25px">Subgenus:</div>
<div style="position:absolute;left:284px;top:274px;width:191px;height:21px;background:#fff;border:1px solid #848484;box-sizing:border-box"></div>
<svg style="position:absolute;left:479px;top:277px" width="12" height="16" viewBox="0 0 12 16"><g fill="#25535e" opacity="0.85"><rect x="0.6" y="0.1" width="10.6" height="1.7"/><rect x="0.6" y="3.1" width="10.6" height="1.7"/><rect x="0.6" y="6.4" width="10.6" height="1.7"/></g><path d="M3.1 14.7 L7.2 10.6" stroke="#25535e" stroke-width="2.6"/><path d="M4.6 9.3 L9.1 9.1 L9 13.4 Z" fill="#25535e"/></svg>
<div class="t" style="left:203.8px;top:304.49px;font-size:11px;color:#0a0a0a;font-weight:normal;letter-spacing:-0.25px">Species:</div>
<div style="position:absolute;left:284px;top:298px;width:191px;height:21px;background:#fff;border:1px solid #848484;box-sizing:border-box"></div>
<div class="t" style="left:286.5px;top:303.39px;font-size:11px;color:#000;font-weight:normal;letter-spacing:-0.1px">bus</div>
<svg style="position:absolute;left:479px;top:301px" width="12" height="16" viewBox="0 0 12 16"><g fill="#25535e" opacity="0.85"><rect x="0.6" y="0.1" width="10.6" height="1.7"/><rect x="0.6" y="3.1" width="10.6" height="1.7"/><rect x="0.6" y="6.4" width="10.6" height="1.7"/></g><path d="M3.1 14.7 L7.2 10.6" stroke="#25535e" stroke-width="2.6"/><path d="M4.6 9.3 L9.1 9.1 L9 13.4 Z" fill="#25535e"/></svg>
<div class="t" style="left:203.8px;top:328.49px;font-size:11px;color:#0a0a0a;font-weight:normal;letter-spacing:-0.25px">Subspecies:</div>
<div style="position:absolute;left:284px;top:322px;width:191px;height:21px;background:#fff;border:1px solid #848484;box-sizing:border-box"></div>
<div style="position:absolute;left:287px;top:326px;width:1px;height:13px;background:#000"></div>
<svg style="position:absolute;left:479px;top:325px" width="12" height="16" viewBox="0 0 12 16"><g fill="#25535e" opacity="0.85"><rect x="0.6" y="0.1" width="10.6" height="1.7"/><rect x="0.6" y="3.1" width="10.6" height="1.7"/><rect x="0.6" y="6.4" width="10.6" height="1.7"/></g><path d="M3.1 14.7 L7.2 10.6" stroke="#25535e" stroke-width="2.6"/><path d="M4.6 9.3 L9.1 9.1 L9 13.4 Z" fill="#25535e"/></svg>
<div class="t" style="left:203.8px;top:352.49px;font-size:11px;color:#0a0a0a;font-weight:normal;letter-spacing:-0.25px">Other:</div>
<div style="position:absolute;left:284px;top:346px;width:191px;height:39px;background:#fff;border:1px solid #8a8a8a;box-sizing:border-box"></div>
<div style="position:absolute;left:286px;top:348px;width:187px;height:17px;background:#e8e9eb"></div>
<div style="position:absolute;left:286px;top:366px;width:13px;height:17px;background:#e8e9eb"></div>
<div style="position:absolute;left:285px;top:365px;width:188px;height:1px;background:#d0d0d0"></div>
<div style="position:absolute;left:299px;top:347px;width:1px;height:36px;background:#d0d0d0"></div>
<div style="position:absolute;left:358px;top:347px;width:1px;height:36px;background:#d0d0d0"></div>
<div style="position:absolute;left:472px;top:347px;width:1px;height:36px;background:#d8d8d8"></div>
<div class="t" style="left:301.5px;top:351.99px;font-size:11px;color:#111;font-weight:normal;letter-spacing:-0.25px">Other R…</div>
<div class="t" style="left:360.5px;top:351.99px;font-size:11px;color:#111;font-weight:normal;letter-spacing:-0.25px">Other Value</div>
<svg style="position:absolute;left:287px;top:370px" width="10" height="9" viewBox="0 0 10 9"><path d="M5 0 V9 M0.5 4.5 H9.5 M1.8 1.3 L8.2 7.7 M8.2 1.3 L1.8 7.7" stroke="#555" stroke-width="0.9"/></svg>
<svg style="position:absolute;left:479px;top:349px" width="12" height="16" viewBox="0 0 12 16"><g fill="#25535e" opacity="0.85"><rect x="0.6" y="0.1" width="10.6" height="1.7"/><rect x="0.6" y="3.1" width="10.6" height="1.7"/><rect x="0.6" y="6.4" width="10.6" height="1.7"/></g><path d="M3.1 14.7 L7.2 10.6" stroke="#25535e" stroke-width="2.6"/><path d="M4.6 9.3 L9.1 9.1 L9 13.4 Z" fill="#25535e"/></svg>
<div class="t" style="left:203.8px;top:394.29px;font-size:11px;color:#0a0a0a;font-weight:normal;letter-spacing:-0.25px">Seq. Num.:</div>
<div style="position:absolute;left:284px;top:388px;width:70px;height:21px;background:#fff;border:1px solid #848484;box-sizing:border-box"></div>
<div class="t" style="left:515.7px;top:208.49px;font-size:11px;color:#0a0a0a;font-weight:normal;letter-spacing:-0.25px">Hybrid?</div>
<div style="position:absolute;left:564px;top:202px;width:56px;height:21px;background:#fff;border:1px solid #848484;box-sizing:border-box"></div>
<svg style="position:absolute;left:603px;top:208px" width="13" height="8" viewBox="0 0 13 8"><path d="M0.5 1 L6.5 7 L12.5 1" stroke="#555" stroke-width="1" fill="none"/></svg>
<div class="t" style="left:566.5px;top:207.39px;font-size:11px;color:#000;font-weight:normal;letter-spacing:-0.1px">No</div>
<div class="t" style="left:622.7px;top:208.49px;font-size:11px;color:#0a0a0a;font-weight:normal;letter-spacing:-0.25px">Rank:</div>
<div style="position:absolute;left:660px;top:202px;width:147px;height:21px;background:#fff;border:1px solid #848484;box-sizing:border-box"></div>
<div style="position:absolute;left:663px;top:205px;width:124px;height:15px;background:#e9eaec"></div>
<svg style="position:absolute;left:790px;top:208px" width="13" height="8" viewBox="0 0 13 8"><path d="M0.5 1 L6.5 7 L12.5 1" stroke="#555" stroke-width="1" fill="none"/></svg>
<div class="t" style="left:516px;top:227.19px;font-size:11px;color:#0a0a0a;font-weight:normal;letter-spacing:-0.25px">Sex:</div>
<div class="t" style="left:594.5px;top:227.19px;font-size:11px;color:#0a0a0a;font-weight:normal;letter-spacing:-0.25px">Parent:</div>
<div style="position:absolute;left:516px;top:242px;width:76px;height:21px;background:#fff;border:1px solid #848484;box-sizing:border-box"></div>
<div style="position:absolute;left:519px;top:245px;width:53px;height:15px;background:#e9eaec"></div>
<svg style="position:absolute;left:575px;top:248px" width="13" height="8" viewBox="0 0 13 8"><path d="M0.5 1 L6.5 7 L12.5 1" stroke="#555" stroke-width="1" fill="none"/></svg>
<div style="position:absolute;left:595px;top:242px;width:177px;height:21px;background:#fff;border:1px solid #848484;box-sizing:border-box"></div>
<div style="position:absolute;left:597px;top:244px;width:173px;height:17px;background:#e9eaec"></div>
<svg style="position:absolute;left:773px;top:244px" width="17" height="17" viewBox="0 0 17 17"><g transform="translate(8.5 8.5) rotate(45) translate(-3.5 -10)"><path d="M5 6 L5 14 A1.5 1.5 0 0 1 2 14 L2 3.5 A2.5 2.5 0 0 1 7 3.5 L7 16 A3.5 3.5 0 0 1 0 16 L0 6.5" stroke="#d4d4d4" stroke-width="1.35" fill="none" stroke-linecap="round"/></g></svg>
<svg style="position:absolute;left:791px;top:248px" width="16" height="10" viewBox="0 0 16 10"><path d="M0.3 5 Q8 -3.2 15.7 5 Q8 13.2 0.3 5 Z" fill="#d0d0d0"/><circle cx="7.8" cy="5" r="3.4" fill="#fff"/><circle cx="7.8" cy="5" r="2.1" fill="#d0d0d0"/><path d="M7.8 5 L7.8 2.6 A2.4 2.4 0 0 1 10.2 5 Z" fill="#fff"/></svg>
<div style="position:absolute;left:516px;top:266px;width:76px;height:21px;background:#fff;border:1px solid #848484;box-sizing:border-box"></div>
<div style="position:absolute;left:518px;top:268px;width:72px;height:17px;background:#e9eaec"></div>
<div style="position:absolute;left:595px;top:266px;width:177px;height:21px;background:#fff;border:1px solid #848484;box-sizing:border-box"></div>
<div style="position:absolute;left:597px;top:268px;width:173px;height:17px;background:#e9eaec"></div>
<svg style="position:absolute;left:773px;top:268px" width="17" height="17" viewBox="0 0 17 17"><g transform="translate(8.5 8.5) rotate(45) translate(-3.5 -10)"><path d="M5 6 L5 14 A1.5 1.5 0 0 1 2 14 L2 3.5 A2.5 2.5 0 0 1 7 3.5 L7 16 A3.5 3.5 0 0 1 0 16 L0 6.5" stroke="#d4d4d4" stroke-width="1.35" fill="none" stroke-linecap="round"/></g></svg>
<svg style="position:absolute;left:791px;top:272px" width="16" height="10" viewBox="0 0 16 10"><path d="M0.3 5 Q8 -3.2 15.7 5 Q8 13.2 0.3 5 Z" fill="#d0d0d0"/><circle cx="7.8" cy="5" r="3.4" fill="#fff"/><circle cx="7.8" cy="5" r="2.1" fill="#d0d0d0"/><path d="M7.8 5 L7.8 2.6 A2.4 2.4 0 0 1 10.2 5 Z" fill="#fff"/></svg>
<div class="t" style="left:516px;top:328.49px;font-size:11px;color:#0a0a0a;font-weight:normal;letter-spacing:-0.25px">Cultivar?</div>
<div style="position:absolute;left:563px;top:322px;width:65px;height:21px;background:#fff;border:1px solid #848484;box-sizing:border-box"></div>
<svg style="position:absolute;left:611px;top:328px" width="13" height="8" viewBox="0 0 13 8"><path d="M0.5 1 L6.5 7 L12.5 1" stroke="#555" stroke-width="1" fill="none"/></svg>
<div class="t" style="left:565.5px;top:327.39px;font-size:11px;color:#000;font-weight:normal;letter-spacing:-0.1px">No</div>
<div class="t" style="left:632px;top:328.49px;font-size:11px;color:#0a0a0a;font-weight:normal;letter-spacing:-0.25px">Name:</div>
<div style="position:absolute;left:665px;top:322px;width:141px;height:21px;background:#fff;border:1px solid #848484;box-sizing:border-box"></div>
<div style="position:absolute;left:667px;top:324px;width:137px;height:17px;background:#e9eaec"></div>
<div class="t" style="left:516px;top:380.49px;font-size:11px;color:#0a0a0a;font-weight:normal;letter-spacing:-0.2px">Applicable Code:</div>
<div style="position:absolute;left:598px;top:374px;width:65px;height:21px;background:#fff;border:1px solid #848484;box-sizing:border-box"></div>
<svg style="position:absolute;left:646px;top:380px" width="13" height="8" viewBox="0 0 13 8"><path d="M0.5 1 L6.5 7 L12.5 1" stroke="#555" stroke-width="1" fill="none"/></svg>
<div class="t" style="left:600.5px;top:379.39px;font-size:11px;color:#000;font-weight:normal;letter-spacing:-0.1px">ICZN</div>
<div class="t" style="left:671.5px;top:380.49px;font-size:11px;color:#0a0a0a;font-weight:normal;letter-spacing:-0.25px">Rank:</div>
<div style="position:absolute;left:703px;top:374px;width:103px;height:21px;background:#fff;border:1px solid #848484;box-sizing:border-box"></div>
<div style="position:absolute;left:705px;top:376px;width:99px;height:17px;background:#e9eaec"></div>
<div class="t" style="left:705.5px;top:379.39px;font-size:11px;color:#000;font-weight:normal;letter-spacing:-0.1px">Species</div>
<div class="t" style="left:203.8px;top:447.49px;font-size:11px;color:#0a0a0a;font-weight:normal;letter-spacing:-0.25px">Automatic?</div>
<div style="position:absolute;left:274px;top:441px;width:65px;height:21px;background:#fff;border:1px solid #848484;box-sizing:border-box"></div>
<svg style="position:absolute;left:322px;top:447px" width="13" height="8" viewBox="0 0 13 8"><path d="M0.5 1 L6.5 7 L12.5 1" stroke="#555" stroke-width="1" fill="none"/></svg>
<div class="t" style="left:276.5px;top:446.39px;font-size:11px;color:#000;font-weight:normal;letter-spacing:-0.1px">Yes</div>
<div class="t" style="left:342.8px;top:447.49px;font-size:11px;color:#0a0a0a;font-weight:normal;letter-spacing:-0.25px">Name:</div>
<div style="position:absolute;left:378px;top:441px;width:428px;height:21px;background:#fff;border:1px solid #848484;box-sizing:border-box"></div>
<div style="position:absolute;left:380px;top:443px;width:424px;height:17px;background:#e9eaec"></div>
<div class="t" style="left:380.5px;top:446.39px;font-size:11px;color:#000;font-weight:normal;letter-spacing:-0.1px">Aus bus</div>
<div class="t" style="left:203.8px;top:499.49px;font-size:11px;color:#0a0a0a;font-weight:normal;letter-spacing:-0.25px">Currently Accepted?</div>
<div style="position:absolute;left:323px;top:493px;width:75px;height:21px;background:#fff;border:1px solid #848484;box-sizing:border-box"></div>
<svg style="position:absolute;left:381px;top:499px" width="13" height="8" viewBox="0 0 13 8"><path d="M0.5 1 L6.5 7 L12.5 1" stroke="#555" stroke-width="1" fill="none"/></svg>
<div class="t" style="left:325.5px;top:498.39px;font-size:11px;color:#000;font-weight:normal;letter-spacing:-0.1px">Yes</div>
<div class="t" style="left:410.6px;top:499.49px;font-size:11px;color:#0a0a0a;font-weight:normal;letter-spacing:-0.25px">Current Name:</div>
<div style="position:absolute;left:484px;top:493px;width:285px;height:21px;background:#fff;border:1px solid #848484;box-sizing:border-box"></div>
<div style="position:absolute;left:486px;top:495px;width:281px;height:17px;background:#e9eaec"></div>
<div class="t" style="left:486.5px;top:498.39px;font-size:11px;color:#000;font-weight:normal;letter-spacing:-0.1px">Aus bus : Demoidae : : :</div>
<svg style="position:absolute;left:770px;top:495px" width="17" height="17" viewBox="0 0 17 17"><g transform="translate(8.5 8.5) rotate(45) translate(-3.5 -10)"><path d="M5 6 L5 14 A1.5 1.5 0 0 1 2 14 L2 3.5 A2.5 2.5 0 0 1 7 3.5 L7 16 A3.5 3.5 0 0 1 0 16 L0 6.5" stroke="#d4d4d4" stroke-width="1.35" fill="none" stroke-linecap="round"/></g></svg>
<svg style="position:absolute;left:788px;top:499px" width="16" height="10" viewBox="0 0 16 10"><path d="M0.3 5 Q8 -3.2 15.7 5 Q8 13.2 0.3 5 Z" fill="#25535e"/><circle cx="7.8" cy="5" r="3.4" fill="#fff"/><circle cx="7.8" cy="5" r="2.1" fill="#25535e"/><path d="M7.8 5 L7.8 2.6 A2.4 2.4 0 0 1 10.2 5 Z" fill="#fff"/></svg>
<div style="position:absolute;left:0px;top:0px;width:823px;height:634px;border:1px solid #1979ca;box-sizing:border-box;pointer-events:none"></div>
</body></html>
